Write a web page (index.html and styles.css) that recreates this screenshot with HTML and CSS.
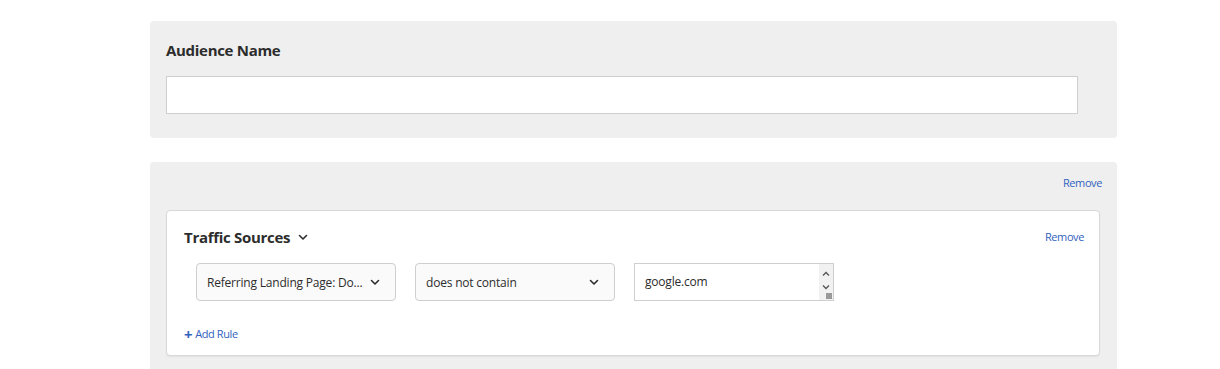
FILE: index.html
```html
<!DOCTYPE html>
<html lang="en">
<head>
  <meta charset="UTF-8" />
  <title>Audience</title>
  <link rel="stylesheet" href="styles.css">
</head>
<body>
  <div class="page">
    <!-- Audience name -->
    <section class="panel name-panel">
      <h2 class="label">Audience Name</h2>
      <input class="text-input" type="text">
    </section>

    <!-- Rule groups -->
    <section class="panel rules-panel">
      <div class="panel-top">
        <a class="link" href="#">Remove</a>
      </div>
      <div class="card">
        <div class="card-head">
          <h3 class="card-title">Traffic Sources
            <svg class="chev" width="10" height="7" viewBox="0 0 10 7"><path d="M1.5 1.5 L5 5 L8.5 1.5" fill="none" stroke="#2c2c2c" stroke-width="1.6" stroke-linecap="round" stroke-linejoin="round"/></svg>
          </h3>
          <a class="link" href="#">Remove</a>
        </div>
        <div class="rule-row">
          <div class="select">
            <span>Referring Landing Page: Do...</span>
            <svg width="10" height="7" viewBox="0 0 10 7"><path d="M1.5 1.5 L5 5 L8.5 1.5" fill="none" stroke="#2c2c2c" stroke-width="1.6" stroke-linecap="round" stroke-linejoin="round"/></svg>
          </div>
          <div class="select">
            <span>does not contain</span>
            <svg width="10" height="7" viewBox="0 0 10 7"><path d="M1.5 1.5 L5 5 L8.5 1.5" fill="none" stroke="#2c2c2c" stroke-width="1.6" stroke-linecap="round" stroke-linejoin="round"/></svg>
          </div>
          <div class="textarea">
            <span class="value">google.com</span>
            <div class="scrollbar">
              <svg width="8" height="6" viewBox="0 0 8 6"><path d="M1 4.5 L4 1.5 L7 4.5" fill="none" stroke="#555" stroke-width="1.3"/></svg>
              <svg width="8" height="6" viewBox="0 0 8 6"><path d="M1 1.5 L4 4.5 L7 1.5" fill="none" stroke="#555" stroke-width="1.3"/></svg>
              <span class="grip"></span>
            </div>
          </div>
        </div>
        <a class="link add-rule" href="#"><span class="plus">+</span> Add Rule</a>
      </div>
    </section>
  </div>
</body>
</html>
```

FILE: styles.css
```css
:root {
  --panel-bg: #efefef;
  --text: #2c2c2c;
  --link: #3262c0;
  --border: #cfcfcf;
}

* {
  box-sizing: border-box;
  margin: 0;
  padding: 0;
}

body {
  background: #fff;
  font-family: 'Open Sans', 'Noto Sans', sans-serif;
  color: var(--text);
}

.page {
  width: 967px;
  margin-left: 150px;
  padding-top: 21px;
  display: flex;
  flex-direction: column;
  gap: 24px;
}

.panel {
  background: var(--panel-bg);
  border-radius: 4px;
}

/* Audience name */
.name-panel {
  padding: 18px 16px 24px;
}

.label {
  font-size: 15px;
  font-weight: 700;
  line-height: 22px;
  letter-spacing: -0.3px;
  margin-bottom: 15px;
}

.text-input {
  display: block;
  width: 912px;
  height: 38px;
  border: 1px solid var(--border);
  background: #fff;
  outline: none;
}

/* Rules */
.rules-panel {
  padding: 14px 15px 14px 16px;
  height: 210px;
}

.panel-top {
  display: flex;
  justify-content: flex-end;
  height: 14px;
  margin-bottom: 20px;
}

.link {
  font-size: 11px;
  line-height: 14px;
  color: var(--link);
  text-decoration: none;
  letter-spacing: -0.4px;
}

.card {
  width: 934px;
  background: #fff;
  border: 1px solid #d8d8d8;
  border-radius: 4px;
  box-shadow: 0 1px 2px rgba(0, 0, 0, 0.06);
  padding: 15px 15px 10px 17px;
}

.card-head {
  display: flex;
  justify-content: space-between;
  align-items: center;
  height: 22px;
  margin-bottom: 15px;
}

.card-title {
  font-size: 15px;
  font-weight: 700;
  letter-spacing: -0.3px;
  display: flex;
  align-items: center;
  gap: 8px;
}

.rule-row {
  display: flex;
  gap: 19px;
  padding-left: 12px;
  margin-bottom: 22px;
}

.select {
  width: 200px;
  height: 38px;
  border: 1px solid var(--border);
  border-radius: 4px;
  background: #fafafa;
  display: flex;
  align-items: center;
  justify-content: space-between;
  padding: 0 15px 0 10px;
  font-size: 12px;
  letter-spacing: -0.2px;
}

.textarea {
  width: 200px;
  height: 38px;
  border: 1px solid var(--border);
  background: #fff;
  display: flex;
  justify-content: space-between;
  padding-left: 10px;
  font-size: 12px;
  letter-spacing: -0.2px;
}

.textarea .value {
  line-height: 36px;
}

.scrollbar {
  width: 14px;
  background: #f1f1f1;
  display: flex;
  flex-direction: column;
  align-items: center;
  justify-content: space-around;
  padding: 3px 0 6px;
  position: relative;
}

.grip {
  position: absolute;
  right: 1px;
  bottom: 1px;
  width: 6px;
  height: 6px;
  background: radial-gradient(circle, #999 0.8px, transparent 1px) 0 0 / 2px 2px;
}

.add-rule {
  display: inline-flex;
  align-items: center;
  gap: 3px;
}

.plus {
  font-size: 15px;
  font-weight: 700;
  line-height: 14px;
}
```
